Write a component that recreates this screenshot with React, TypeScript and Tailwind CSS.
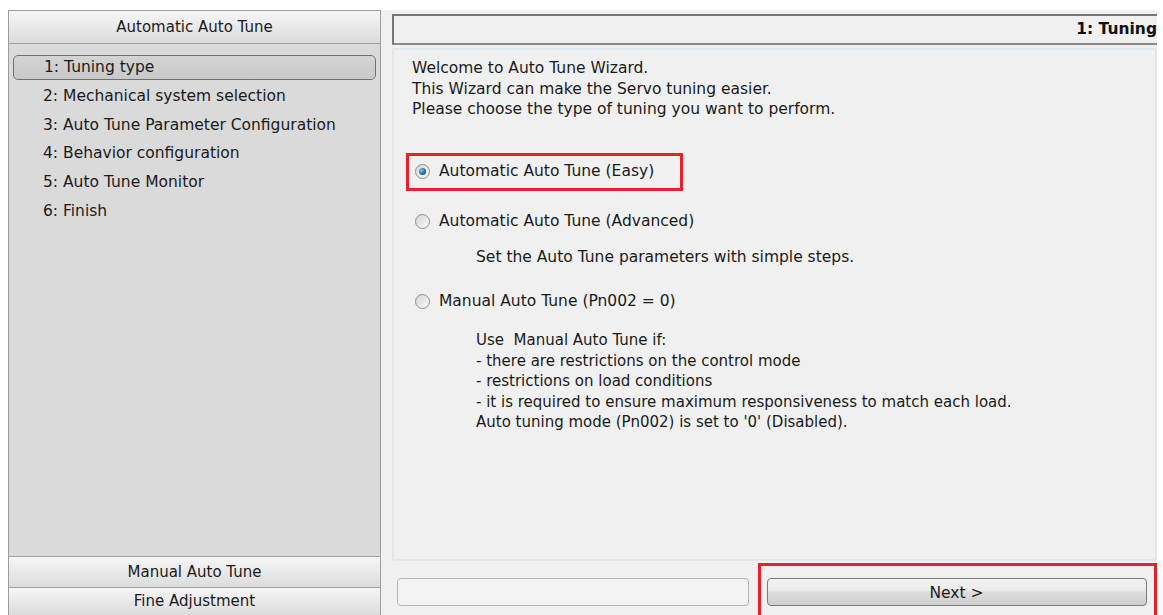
import React from "react";

const steps = [
  "1: Tuning type",
  "2: Mechanical system selection",
  "3: Auto Tune Parameter Configuration",
  "4: Behavior configuration",
  "5: Auto Tune Monitor",
  "6: Finish",
];

const font = { fontFamily: '"DejaVu Sans", sans-serif' };

function Radio({ checked }: { checked?: boolean }) {
  return (
    <span className="relative inline-flex h-[15px] w-[15px] shrink-0 items-center justify-center rounded-full border border-[#8f8f8f] bg-[linear-gradient(135deg,#d6d6d6_0%,#f8f8f8_100%)]">
      {checked && (
        <span className="h-[7px] w-[7px] rounded-full bg-[radial-gradient(circle_at_35%_35%,#7fc4f0_0%,#1f6fa8_55%,#0f3f66_100%)]" />
      )}
    </span>
  );
}

function SectionBar({ label, className = "" }: { label: string; className?: string }) {
  return (
    <div
      className={
        "flex items-center justify-center border-[#a0a0a0] bg-[linear-gradient(#f6f6f6,#dcdcdc)] text-[15px] text-[#1a1a1a] " +
        className
      }
    >
      {label}
    </div>
  );
}

export default function App() {
  return (
    <div className="flex h-[615px] w-[1163px] overflow-hidden bg-white pt-[10px]" style={font}>
      {/* wizard navigation */}
      <div className="ml-[8px] flex w-[373px] flex-col border-x border-t border-[#9c9c9c]">
        <SectionBar label="Automatic Auto Tune" className="h-[33px] border-b" />
        <div className="flex flex-1 flex-col bg-[#dadada] px-[4px] pt-[11px]">
          {steps.map((s, i) => (
            <div
              key={s}
              className={
                "flex items-center pl-[30px] text-[15.5px] text-[#1a1a1a] " +
                (i === 0
                  ? "mb-[2px] h-[25px] rounded-[5px] border border-[#707070] bg-[linear-gradient(#d4d4d4,#c9c9c9)]"
                  : "h-[28.8px]")
              }
            >
              {s}
            </div>
          ))}
        </div>
        <SectionBar label="Manual Auto Tune" className="h-[31px] border-t" />
        <SectionBar label="Fine Adjustment" className="h-[28px] border-t" />
      </div>

      {/* wizard page */}
      <div className="flex w-[776px] flex-col bg-[#f0f0f0] pl-[11px]">
        <div className="mt-[4px] flex h-[31px] items-center justify-end border-y-2 border-l-2 border-[#777777] border-b-[#8a8a8a] bg-[#f0f0f0]">
          <span className="whitespace-nowrap text-[15.5px] font-bold text-[#111]">1: Tuning</span>
        </div>

        <div className="mt-[3px] flex-1 rounded-[2px] border-2 border-[#dfe8ef] bg-[#f0f0f0] pl-[18px] pt-[8px] text-[15.5px] leading-[20.5px] text-[#1a1a1a]">
          <p>Welcome to Auto Tune Wizard.</p>
          <p>This Wizard can make the Servo tuning easier.</p>
          <p>Please choose the type of tuning you want to perform.</p>

          <div className="mt-[33px] ml-[-6px] inline-flex h-[38px] items-center gap-[9px] border-[3px] border-[#e8202a] pl-[6px] pr-[26px]">
            <Radio checked />
            <span>Automatic Auto Tune (Easy)</span>
          </div>

          <div className="mt-[13px] flex h-[36px] items-center gap-[9px] pl-[3px]">
            <Radio />
            <span>Automatic Auto Tune (Advanced)</span>
          </div>
          <p className="mt-[7px] pl-[64px]">Set the Auto Tune parameters with simple steps.</p>

          <div className="mt-[24px] flex h-[20px] items-center gap-[9px] pl-[3px]">
            <Radio />
            <span>Manual Auto Tune (Pn002 = 0)</span>
          </div>
          <div className="mt-[19px] pl-[64px] text-[15px] leading-[20.6px]">
            <p>Use&nbsp; Manual Auto Tune if:</p>
            <p>- there are restrictions on the control mode</p>
            <p>- restrictions on load conditions</p>
            <p>- it is required to ensure maximum responsiveness to match each load.</p>
            <p>Auto tuning mode (Pn002) is set to '0' (Disabled).</p>
          </div>
        </div>

        <div className="flex h-[54px] items-start">
          <div className="ml-[5px] mt-[17px] h-[28px] w-[352px] rounded-[4px] border border-[#b5b5b5] bg-[#f3f3f3]" />
          <div className="ml-[9px] mt-[2px] flex h-[60px] w-[400px] items-start border-[3px] border-b-0 border-[#e8202a] pl-[6px] pt-[12px]">
            <button className="flex h-[28px] w-[380px] items-center justify-center rounded-[4px] border border-[#7b7b7b] bg-[linear-gradient(#f2f2f2_0%,#ebebeb_45%,#dddddd_50%,#cfcfcf_100%)] pt-[3px] text-[15.5px] text-[#1a1a1a]">
              Next &gt;
            </button>
          </div>
        </div>
      </div>
    </div>
  );
}
